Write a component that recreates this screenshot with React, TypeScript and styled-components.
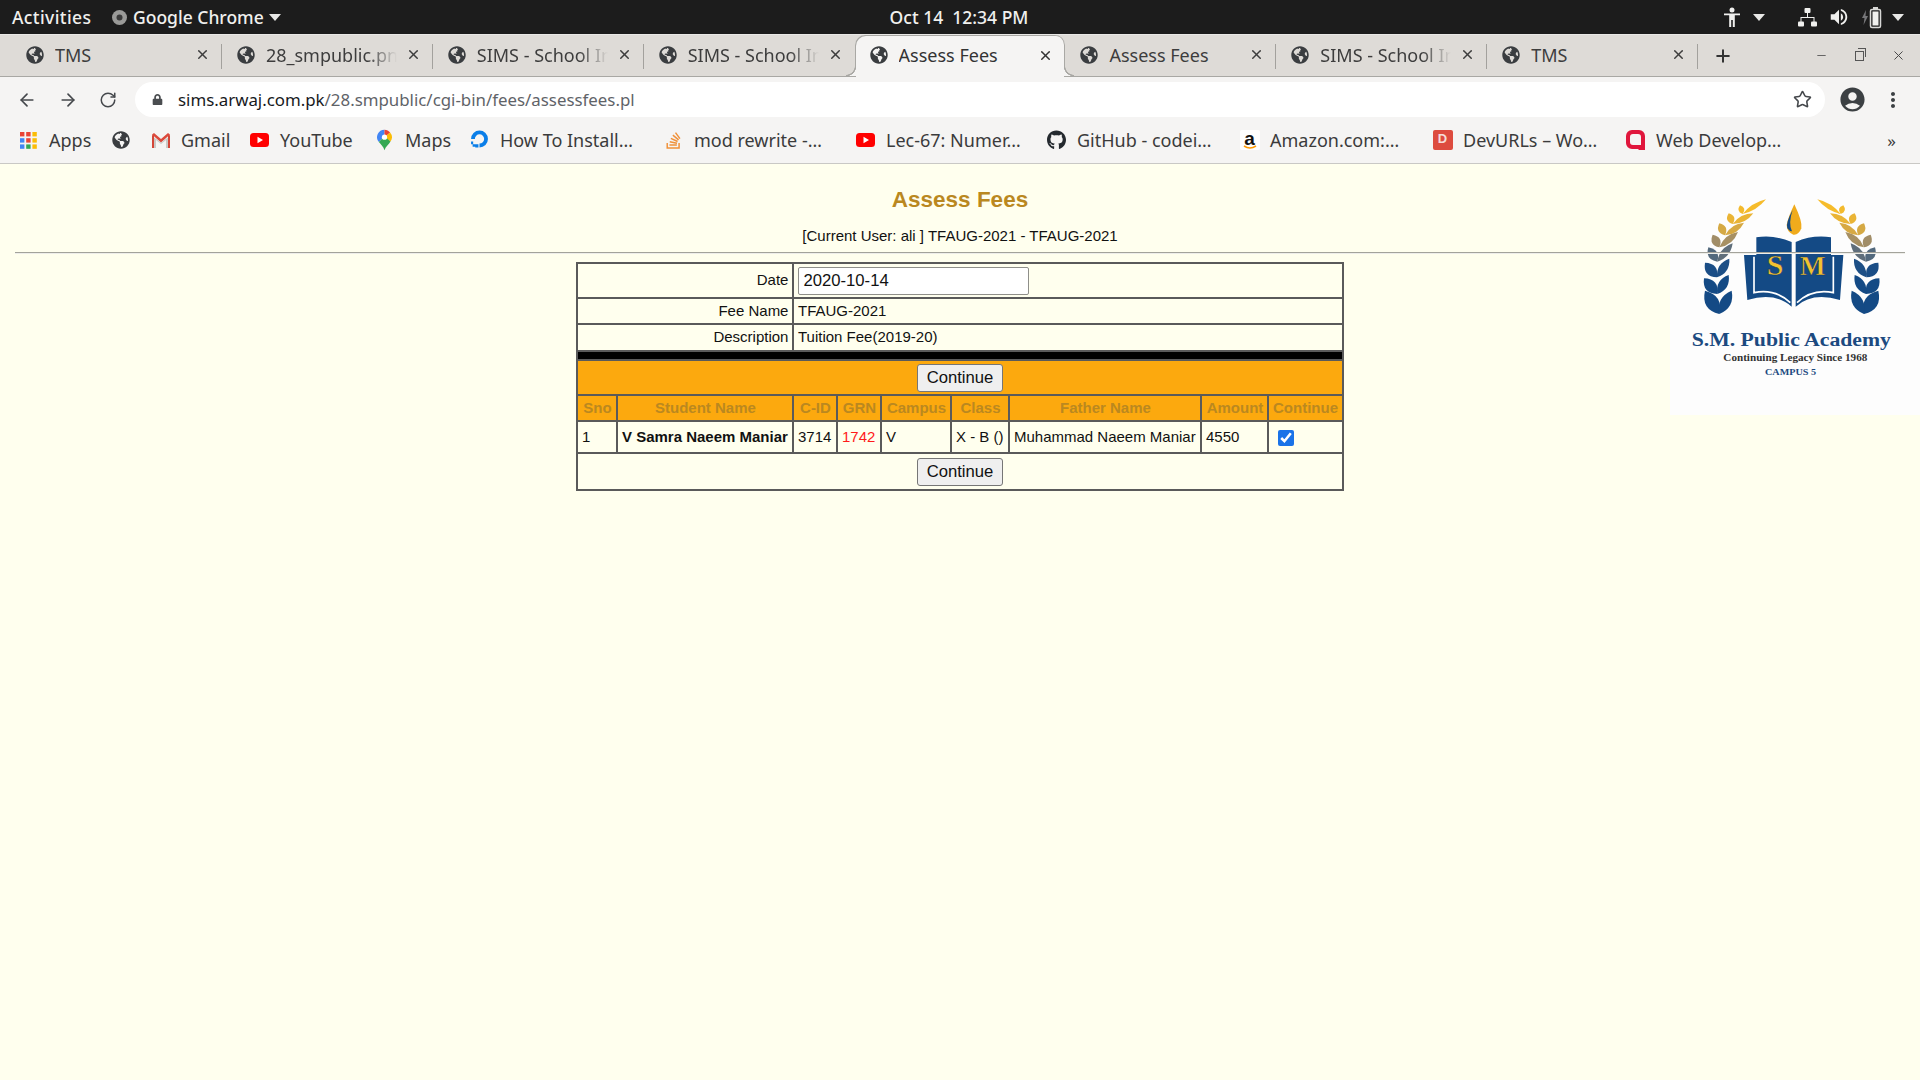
import React from "react";
import styled, { createGlobalStyle } from "styled-components";
import { FaGlobeAmericas, FaGithub, FaStackOverflow, FaLock } from "react-icons/fa";
import { MdAccountCircle, MdMoreVert, MdVolumeUp } from "react-icons/md";
import { ArrowLeft, ArrowRight, RotateCw, Star, X, Plus, Minus } from "lucide-react";

const UI = `"Noto Sans", "Open Sans", sans-serif`;
const WEB = `"Liberation Sans", Arial, sans-serif`;

const Global = createGlobalStyle`
  html, body { margin: 0; padding: 0; background: #ffffee; }
  * { box-sizing: border-box; }
`;

const Shell = styled.div`
  width: 100%;
  height: 1080px;
  display: flex;
  flex-direction: column;
  overflow: hidden;
  font-family: ${UI};
`;

const TopBar = styled.header`
  height: 34px;
  background: #1c1c1c;
  color: #f0f0ee;
  display: grid;
  grid-template-columns: 1fr auto 1fr;
  align-items: center;
  font-size: 17.5px;
  font-weight: 500;
  padding: 0 16px 0 12px;
`;
const TopLeft = styled.div`
  display: flex;
  align-items: center;
`;
const Activities = styled.span`
  width: 100px;
  letter-spacing: 0.4px;
`;
const AppName = styled.span`
  margin: 0 7px 0 6px;
  width: 129px;
  white-space: nowrap;
`;
const Clock = styled.div`
  white-space: pre;
  padding-left: 2px;
`;
const TopRight = styled.div`
  display: flex;
  align-items: center;
  justify-content: flex-end;
  color: #f0f0ee;
`;
const Caret = styled.span<{ $ml?: number }>`
  width: 0;
  height: 0;
  border-left: 6px solid transparent;
  border-right: 6px solid transparent;
  border-top: 7px solid #e8e8e6;
  margin-left: ${(p) => p.$ml ?? 0}px;
`;
const TrayIcon = styled.span<{ $ml: number }>`
  display: flex;
  margin-left: ${(p) => p.$ml}px;
`;

const TabStrip = styled.div`
  height: 43px;
  background: #dedbd7;
  border-top: 1px solid #e9e8e6;
  border-bottom: 1px solid #a9a8a4;
  display: flex;
  align-items: stretch;
  padding-left: 11px;
  color: #333;
`;
const Tab = styled.div<{ $active?: boolean }>`
  width: 210.9px;
  height: ${(p) => (p.$active ? "42px" : "41px")};
  flex: none;
  position: relative;
  display: flex;
  align-items: center;
  padding: 0 12px 2px 15px;
  font-size: 18px;
  color: ${(p) => (p.$active ? "#333" : "#3d3d3d")};
  background: ${(p) => (p.$active ? "#f5f4f3" : "transparent")};
  border-radius: ${(p) => (p.$active ? "10px 10px 0 0" : "0")};
  box-shadow: ${(p) => (p.$active ? "inset 1px 1px 0 #a9a8a4, inset -1px 0 0 #a9a8a4" : "none")};
  z-index: ${(p) => (p.$active ? 1 : 0)};
  ${(p) =>
    p.$active
      ? `
    &::before, &::after {
      content: "";
      position: absolute;
      bottom: 1px;
      width: 10px;
      height: 10px;
    }
    &::before {
      left: -9px;
      background: radial-gradient(circle at 0 0, #dedbd7 8.5px, #a9a8a4 9px, #a9a8a4 10px, #f5f4f3 10.5px);
    }
    &::after {
      right: -9px;
      background: radial-gradient(circle at 100% 0, #dedbd7 8.5px, #a9a8a4 9px, #a9a8a4 10px, #f5f4f3 10.5px);
    }
  `
      : ""}
`;
const TabSep = styled.span`
  position: absolute;
  right: 0;
  top: 9px;
  width: 1px;
  height: 25px;
  background: #a3a19d;
`;
const TabTitle = styled.span<{ $fade?: boolean }>`
  flex: 1;
  min-width: 0;
  margin-left: 11px;
  margin-right: 9px;
  white-space: nowrap;
  overflow: hidden;
  ${(p) =>
    p.$fade
      ? `-webkit-mask-image: linear-gradient(to right, #000 78%, transparent 100%);
         mask-image: linear-gradient(to right, #000 78%, transparent 100%);`
      : ""}
`;
const NewTab = styled.span`
  display: flex;
  align-items: center;
  margin-left: 15px;
  color: #333;
`;
const WindowButtons = styled.div`
  margin-left: auto;
  display: flex;
  align-items: center;
  gap: 27px;
  padding-right: 14px;
  color: #4a4a4a;
`;
const RestoreIcon = styled.span`
  position: relative;
  width: 9px;
  height: 10px;
  border: 1px solid #555;
  &::after {
    content: "";
    position: absolute;
    top: -4px;
    right: -3px;
    width: 7px;
    height: 8px;
    border-top: 1px solid #555;
    border-right: 1px solid #555;
  }
`;

const Toolbar = styled.div`
  height: 41px;
  background: #f5f4f3;
  padding-top: 5px;
  display: flex;
  align-items: flex-start;
  color: #45484c;
`;
const NavGroup = styled.div`
  width: 135px;
  height: 35px;
  padding-left: 17px;
  display: flex;
  align-items: center;
  gap: 21px;
`;
const UrlBox = styled.div`
  width: 1690px;
  height: 35px;
  background: #fff;
  border-radius: 18px;
  display: flex;
  align-items: center;
  padding: 0 13px 0 17px;
  font-size: 16.85px;
`;
const UrlText = styled.span`
  margin-left: 15px;
  color: #5f6368;
  white-space: nowrap;
  flex: 1;
`;
const UrlHost = styled.span`
  color: #17191c;
`;
const ToolRight = styled.div`
  height: 35px;
  display: flex;
  align-items: center;
  margin-left: 13px;
  gap: 14px;
`;

const BookmarkBar = styled.nav`
  height: 46px;
  background: #f5f4f3;
  border-bottom: 1px solid #c9c8c5;
  display: flex;
  align-items: center;
  padding: 0 0 1px 19px;
  font-size: 18px;
  color: #3b3b3b;
`;
const Bookmark = styled.div<{ $w: number }>`
  width: ${(p) => p.$w}px;
  flex: none;
  display: flex;
  align-items: center;
  white-space: nowrap;
`;
const BookmarkIcon = styled.span`
  width: 19px;
  height: 20px;
  flex: none;
  display: flex;
  align-items: center;
  justify-content: center;
  margin-right: 11px;
`;
const LetterIcon = styled.span<{ $bg: string; $color: string; $size: number }>`
  width: 20px;
  height: 20px;
  flex: none;
  background: ${(p) => p.$bg};
  color: ${(p) => p.$color};
  font: bold ${(p) => p.$size}px/18px ${WEB};
  text-align: center;
  border-radius: 2px;
  position: relative;
`;
const More = styled.span`
  margin-left: auto;
  padding-right: 24px;
  font-size: 17px;
`;

const Page = styled.main`
  flex: 1;
  position: relative;
  background: #ffffee;
  font-family: ${WEB};
  color: #111;
`;
const Logo = styled.svg`
  position: absolute;
  top: 0;
  right: 0;
  width: 250px;
  height: 251px;
  background: #fdfdfd;
`;
const Title = styled.h1`
  margin: 0;
  padding-top: 22px;
  height: 64px;
  text-align: center;
  font-size: 22.5px;
  line-height: 28px;
  font-weight: bold;
  color: #ba8820;
`;
const Subtitle = styled.p`
  margin: 0;
  text-align: center;
  font-size: 15px;
  line-height: 16px;
  height: 24px;
`;
const Rule = styled.hr`
  position: relative;
  margin: 0 15px;
  height: 2px;
  border: 0;
  border-top: 1px solid #a3a39b;
  border-bottom: 1px solid #eeeeea;
`;
const FeeTable = styled.table`
  margin: 8px auto 0;
  width: 767px;
  table-layout: fixed;
  border-collapse: collapse;
  border: 2px solid #444;
  font-size: 15px;
`;
const Col = styled.col<{ $w: number }>`
  width: ${(p) => p.$w}px;
`;
const Row = styled.tr<{ $h: number; $bg?: string }>`
  height: ${(p) => p.$h}px;
  background: ${(p) => p.$bg ?? "transparent"};
`;
const Cell = styled.td<{ $align?: string; $bold?: boolean; $color?: string }>`
  border: 2px solid #5a5a5a;
  padding: 0 4px 2px 3.5px;
  white-space: nowrap;
  text-align: ${(p) => p.$align ?? "left"};
  font-weight: ${(p) => (p.$bold ? "bold" : "normal")};
  color: ${(p) => p.$color ?? "#111"};
`;
const LabelCell = styled(Cell)`
  padding-right: 4px;
`;
const ButtonCell = styled(Cell)`
  padding: 0 4px;
`;
const BarCell = styled.td`
  border: 2px solid #5a5a5a;
  padding: 0;
  background: #000;
`;
const HeadCell = styled.th`
  border: 2px solid #5a5a5a;
  padding: 0 0 1px;
  white-space: nowrap;
  text-align: center;
  font-weight: bold;
  color: #ba8820;
`;
const DateInput = styled.input`
  display: block;
  width: 231px;
  height: 28px;
  border: 1px solid #8f8f8a;
  border-radius: 2px;
  background: #fff;
  padding: 0 4px;
  font: 16.67px ${WEB};
  color: #111;
`;
const SubmitButton = styled.button`
  display: block;
  margin: 0 auto;
  width: 86px;
  height: 28px;
  padding: 0;
  background: #efefef;
  border: 1px solid #767676;
  border-radius: 3px;
  font: 16.67px ${WEB};
  color: #111;
`;
const Tick = styled.input`
  display: block;
  width: 16px;
  height: 16px;
  margin: 2px 0 0 5px;
  accent-color: #1a73e8;
`;

const Globe = ({ size = 18 }: { size?: number }) => <FaGlobeAmericas size={size} color="#3a3d40" style={{ flex: "none" }} />;

const Youtube = () => (
  <svg width="19" height="14" viewBox="0 0 19 14">
    <rect width="19" height="14" rx="3.5" fill="#f00" />
    <path d="M7.5 3.8v6.4L13 7z" fill="#fff" />
  </svg>
);

const tabs = [
  { t: "TMS" },
  { t: "28_smpublic.png", fade: true },
  { t: "SIMS - School Information", fade: true },
  { t: "SIMS - School Information", fade: true },
  { t: "Assess Fees", active: true },
  { t: "Assess Fees" },
  { t: "SIMS - School Information", fade: true },
  { t: "TMS" },
];

const leafTiers: [number, number, number, number, number, number, number][] = [
  [178, 462, 135, 392, 215, 392, 40],
  [172, 402, 132, 355, 206, 345, 34],
  [171, 352, 135, 308, 208, 296, 32],
  [172, 305, 145, 262, 218, 250, 28],
  [178, 262, 158, 224, 234, 216, 26],
  [195, 226, 178, 190, 252, 188, 24],
  [218, 192, 206, 160, 280, 160, 22],
  [248, 162, 240, 136, 318, 118, 18],
];

const mix = (y: number) => {
  const stops: [number, number[]][] = [
    [130, [250, 190, 40]],
    [200, [225, 175, 60]],
    [250, [150, 135, 110]],
    [305, [40, 85, 135]],
    [340, [20, 74, 133]],
    [470, [20, 74, 133]],
  ];
  for (let i = 0; i < stops.length - 1; i++) {
    const [a, ca] = stops[i];
    const [b, cb] = stops[i + 1];
    if (y <= b) {
      const k = Math.max(0, (y - a) / (b - a));
      return `rgb(${ca.map((c, j) => Math.round(c + (cb[j] - c) * k)).join(",")})`;
    }
  }
  return "rgb(20,74,133)";
};

const leaf = (x: number, y: number, tx: number, ty: number, w: number) => {
  const mx = (x + tx) / 2;
  const my = (y + ty) / 2;
  const dx = tx - x;
  const dy = ty - y;
  const l = Math.hypot(dx, dy);
  const nx = (-dy / l) * w;
  const ny = (dx / l) * w;
  return `M${x} ${y}Q${mx + nx} ${my + ny} ${tx} ${ty}Q${mx - nx} ${my - ny} ${x} ${y}Z`;
};

const Laurel = () => (
  <g>
    {leafTiers.map(([x, y, ax, ay, bx, by, w], i) => (
      <g key={i}>
        <path d={leaf(x, y, ax, ay, w)} fill={mix((y + ay) / 2)} />
        <path d={leaf(x, y, bx, by, w * 0.8)} fill={mix((y + by) / 2)} />
      </g>
    ))}
  </g>
);

const BookSide = () => (
  <g>
    <path d="M289 232Q345 224 395 246V440Q345 395 262 420L252 285H289Z" fill="#144a85" />
    <path d="M282 290V398Q345 385 391 428" fill="none" stroke="#fff" strokeWidth="5" />
  </g>
);

export default function App() {
  return (
    <Shell>
      <Global />
      <TopBar>
        <TopLeft>
          <Activities>Activities</Activities>
          <svg width="15" height="15" viewBox="0 0 15 15">
            <circle cx="7.5" cy="7.5" r="7.5" fill="#9a9a98" />
            <circle cx="7.5" cy="7.5" r="3" fill="#3a3a3a" />
          </svg>
          <AppName>Google Chrome</AppName>
          <Caret />
        </TopLeft>
        <Clock>Oct 14  12:34 PM</Clock>
        <TopRight>
          <svg width="16" height="21" viewBox="0 0 16 21" fill="#f0f0ee">
            <circle cx="8" cy="3" r="2.5" />
            <path d="M0 6.5h16v1.8h-5.2V20H8.8v-7H7.2v7H5.2V8.3H0z" />
          </svg>
          <Caret $ml={13} />
          <TrayIcon $ml={33}>
            <svg width="19" height="19" viewBox="0 0 19 19" fill="#f0f0ee">
              <rect x="6.5" y="0" width="6" height="5" rx="1" />
              <rect x="0" y="13.5" width="6" height="5" rx="1" />
              <rect x="13" y="13.5" width="6" height="5" rx="1" />
              <path d="M9 5h1v4h6.5v5h-1v-4h-12v4h-1V9H9z" />
            </svg>
          </TrayIcon>
          <TrayIcon $ml={11}>
            <MdVolumeUp size={22} />
          </TrayIcon>
          <TrayIcon $ml={11}>
            <svg width="22" height="23" viewBox="0 0 22 23">
              <path d="M5 4 1 12h2.5L2.5 19 7 10H4.5z" fill="#77777a" />
              <rect x="9.5" y="3.5" width="10" height="18" rx="1.5" fill="none" stroke="#d8d8d6" strokeWidth="1.5" />
              <rect x="12" y="1" width="5" height="2" fill="#d8d8d6" />
              <rect x="11.5" y="5.5" width="6" height="14" fill="#f0f0ee" />
            </svg>
          </TrayIcon>
          <Caret $ml={9} />
        </TopRight>
      </TopBar>

      <TabStrip>
        {tabs.map((tab, i) => (
          <Tab key={i} $active={tab.active}>
            <Globe />
            <TabTitle $fade={tab.fade}>{tab.t}</TabTitle>
            <X size={15} strokeWidth={2.4} style={{ flex: "none" }} />
            {!tab.active && i !== 3 && i !== 4 && <TabSep />}
          </Tab>
        ))}
        <NewTab>
          <Plus size={20} strokeWidth={2.4} />
        </NewTab>
        <WindowButtons>
          <Minus size={13} strokeWidth={1.5} />
          <RestoreIcon />
          <X size={15} strokeWidth={1.6} />
        </WindowButtons>
      </TabStrip>

      <Toolbar>
        <NavGroup>
          <ArrowLeft size={20} strokeWidth={2} />
          <ArrowRight size={20} strokeWidth={2} />
          <RotateCw size={18} strokeWidth={2} />
        </NavGroup>
        <UrlBox>
          <FaLock size={11} color="#4a4d50" />
          <UrlText>
            <UrlHost>sims.arwaj.com.pk</UrlHost>/28.smpublic/cgi-bin/fees/assessfees.pl
          </UrlText>
          <Star size={19} strokeWidth={2} />
        </UrlBox>
        <ToolRight>
          <MdAccountCircle size={29} color="#3c4043" />
          <MdMoreVert size={24} color="#3c4043" />
        </ToolRight>
      </Toolbar>

      <BookmarkBar>
        <Bookmark $w={92}>
          <BookmarkIcon>
            <svg width="17" height="17" viewBox="0 0 17 17">
              {["#ea4335", "#ea4335", "#fbbc05", "#4285f4", "#ea4335", "#fbbc05", "#4285f4", "#34a853", "#fbbc05"].map((c, i) => (
                <rect key={i} x={(i % 3) * 6.2} y={Math.floor(i / 3) * 6.2} width="4.4" height="4.4" fill={c} />
              ))}
            </svg>
          </BookmarkIcon>
          Apps
        </Bookmark>
        <Bookmark $w={40}>
          <BookmarkIcon>
            <Globe />
          </BookmarkIcon>
        </Bookmark>
        <Bookmark $w={99}>
          <BookmarkIcon>
            <svg width="18" height="15" viewBox="0 0 18 15">
              <path d="M0 2.5 2 1v14H0z" fill="#d44638" />
              <path d="M18 2.5 16 1v14h2z" fill="#d44638" />
              <path d="M0 1.5 2 0l7 6 7-6 2 1.5-9 8z" fill="#db4a3c" />
              <path d="M2 4.5 9 9.5l7-5V15H14V7l-5 4-5-4v8H2z" fill="#c9c9c6" />
            </svg>
          </BookmarkIcon>
          Gmail
        </Bookmark>
        <Bookmark $w={125}>
          <BookmarkIcon>
            <Youtube />
          </BookmarkIcon>
          YouTube
        </Bookmark>
        <Bookmark $w={95}>
          <BookmarkIcon>
            <svg width="15" height="22" viewBox="0 0 16 22">
              <path d="M8 0a8 8 0 0 0-6 13.2L8 7z" fill="#4285f4" />
              <path d="M8 0c2.5 0 4.600 1.200 6 3L8 8z" fill="#ea4335" />
              <path d="M14 3a8 8 0 0 1 .4 9.600L8 8z" fill="#fbbc05" />
              <path d="M2 13.200 8 7l6.400 5.600C12.500 16 9 18 8 22c-1-4-4-6-6-8.800z" fill="#34a853" />
              <circle cx="8" cy="8" r="2.800" fill="#fff" />
            </svg>
          </BookmarkIcon>
          Maps
        </Bookmark>
        <Bookmark $w={194}>
          <BookmarkIcon>
            <svg width="20" height="22" viewBox="1 2 18 18">
              <path d="M10 18v-3.600a4.400 4.400 0 1 0-4.400-4.400H2a8 8 0 1 1 8 8z" fill="#0a7ee8" />
              <path d="M6 15h3v3H6zM3.500 15H6v2.500H3.500zM2 12.500h2V15H2z" fill="#0a7ee8" />
            </svg>
          </BookmarkIcon>
          How To Install…
        </Bookmark>
        <Bookmark $w={192}>
          <BookmarkIcon>
            <FaStackOverflow size={19} color="#f0913a" />
          </BookmarkIcon>
          mod rewrite -…
        </Bookmark>
        <Bookmark $w={191}>
          <BookmarkIcon>
            <Youtube />
          </BookmarkIcon>
          Lec-67: Numer…
        </Bookmark>
        <Bookmark $w={193}>
          <BookmarkIcon>
            <FaGithub size={20} color="#24292e" />
          </BookmarkIcon>
          GitHub - codei…
        </Bookmark>
        <Bookmark $w={193}>
          <BookmarkIcon>
            <LetterIcon $bg="#fff" $color="#111" $size={19}>
              a
              <svg width="14" height="5" viewBox="0 0 14 5" style={{ position: "absolute", left: 3, bottom: 0 }}>
                <path d="M1 1q6 4 12 0" fill="none" stroke="#f90" strokeWidth="1.600" />
              </svg>
            </LetterIcon>
          </BookmarkIcon>
          Amazon.com:…
        </Bookmark>
        <Bookmark $w={193}>
          <BookmarkIcon>
            <LetterIcon $bg="#dd4b3e" $color="#f6dcd8" $size={13}>D</LetterIcon>
          </BookmarkIcon>
          DevURLs – Wo…
        </Bookmark>
        <Bookmark $w={200}>
          <BookmarkIcon>
            <svg width="19" height="20" viewBox="0 0 19 20">
              <path fillRule="evenodd" d="M6 0h7a6 6 0 0 1 6 6v14h-6l-1-1H6a6 6 0 0 1-6-6V6a6 6 0 0 1 6-6zm1 4a3 3 0 0 0-3 3v5a3 3 0 0 0 3 3h8V7a3 3 0 0 0-3-3z" fill="#e0163c" />
            </svg>
          </BookmarkIcon>
          Web Develop…
        </Bookmark>
        <More>»</More>
      </BookmarkBar>

      <Page>
        <Logo viewBox="30 12 750 753">
          <Laurel />
          <g transform="translate(790 0) scale(-1 1)">
            <Laurel />
          </g>
          <BookSide />
          <g transform="translate(802 0) scale(-1 1)">
            <BookSide />
          </g>
          <path d="M403 133Q428 185 424 205Q416 226 400 224Q380 215 380 195Q385 170 403 133Z" fill="#f0ab1c" />
          <path d="M398 150Q376 190 382 205Q388 214 396 214Q384 190 398 150Z" fill="#144a85" />
          <text x="345" y="346" textAnchor="middle" fontFamily="Liberation Serif" fontWeight="bold" fontSize="90" fill="#f2c230" stroke="#0f3565" strokeWidth="1.500">S</text>
          <text x="458" y="346" textAnchor="middle" fontFamily="Liberation Serif" fontWeight="bold" fontSize="82" fill="#f2c230" stroke="#0f3565" strokeWidth="1.500">M</text>
          <text x="95" y="558" textLength="598" lengthAdjust="spacingAndGlyphs" fontFamily="Liberation Serif" fontWeight="bold" fontSize="58" fill="#1c4a80">S.M. Public Academy</text>
          <text x="190" y="604" textLength="432" lengthAdjust="spacingAndGlyphs" fontFamily="Liberation Serif" fontWeight="bold" fontSize="29" fill="#333">Continuing Legacy Since 1968</text>
          <text x="315" y="646" textLength="153" lengthAdjust="spacingAndGlyphs" fontFamily="Liberation Serif" fontWeight="bold" fontSize="26" fill="#1c4a80">CAMPUS 5</text>
        </Logo>
        <Title>Assess Fees</Title>
        <Subtitle>[Current User: ali ] TFAUG-2021 - TFAUG-2021</Subtitle>
        <Rule />
        <FeeTable>
          <colgroup>
            <Col $w={40} />
            <Col $w={176} />
            <Col $w={44} />
            <Col $w={44} />
            <Col $w={70} />
            <Col $w={58} />
            <Col $w={192} />
            <Col $w={67} />
            <Col $w={74} />
          </colgroup>
          <tbody>
            <Row $h={35}>
              <LabelCell colSpan={2} $align="right">Date</LabelCell>
              <ButtonCell colSpan={7}>
                <DateInput defaultValue="2020-10-14" />
              </ButtonCell>
            </Row>
            <Row $h={26}>
              <LabelCell colSpan={2} $align="right">Fee Name</LabelCell>
              <Cell colSpan={7}>TFAUG-2021</Cell>
            </Row>
            <Row $h={27}>
              <LabelCell colSpan={2} $align="right">Description</LabelCell>
              <Cell colSpan={7}>Tuition Fee(2019-20)</Cell>
            </Row>
            <Row $h={9}>
              <BarCell colSpan={9} />
            </Row>
            <Row $h={35} $bg="#fca90e">
              <ButtonCell colSpan={9}>
                <SubmitButton type="button">Continue</SubmitButton>
              </ButtonCell>
            </Row>
            <Row $h={26} $bg="#fca90e">
              {["Sno", "Student Name", "C-ID", "GRN", "Campus", "Class", "Father Name", "Amount", "Continue"].map((h) => (
                <HeadCell key={h}>{h}</HeadCell>
              ))}
            </Row>
            <Row $h={32}>
              <Cell>1</Cell>
              <Cell $bold>V Samra Naeem Maniar</Cell>
              <Cell>3714</Cell>
              <Cell $color="#ff1a1a">1742</Cell>
              <Cell>V</Cell>
              <Cell>X - B ()</Cell>
              <Cell>Muhammad Naeem Maniar</Cell>
              <Cell>4550</Cell>
              <ButtonCell>
                <Tick type="checkbox" defaultChecked />
              </ButtonCell>
            </Row>
            <Row $h={37}>
              <ButtonCell colSpan={9}>
                <SubmitButton type="button">Continue</SubmitButton>
              </ButtonCell>
            </Row>
          </tbody>
        </FeeTable>
      </Page>
    </Shell>
  );
}
